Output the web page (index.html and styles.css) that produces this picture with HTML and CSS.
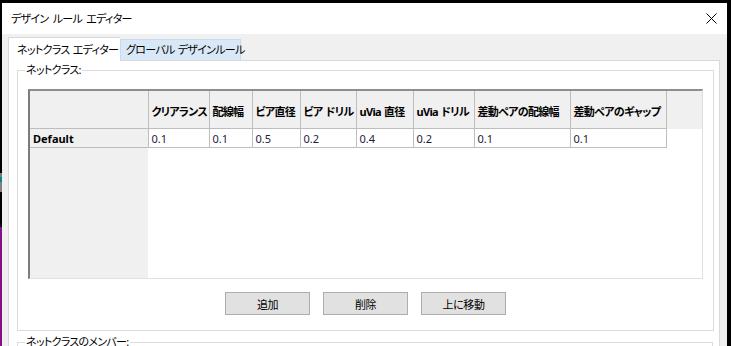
FILE: index.html
```html
<!DOCTYPE html>
<html lang="ja">
<head>
    <meta charset="UTF-8">
    <meta name="viewport" content="width=device-width, initial-scale=1.0">
    <title>デザイン ルール エディター</title>
    <link rel="stylesheet" href="styles.css">
</head>
<body>

    <div class="desktop">
        <div class="backdrop-strip"></div>

        <div class="dialog">
            <div class="titlebar">
                <span class="title">デザイン ルール エディター</span>
                <button class="close-btn" title="閉じる">
                    <svg width="11" height="11" viewBox="0 0 11 11">
                        <path d="M0.5 0.5 L10.5 10.5 M10.5 0.5 L0.5 10.5" stroke="#000" stroke-width="1" fill="none"/>
                    </svg>
                </button>
            </div>

            <div class="dialog-body">
                <div class="tabs">
                    <div class="tab active">ネットクラス エディター</div>
                    <div class="tab">グローバル デザインルール</div>
                </div>

                <div class="tab-panel">
                    <fieldset class="group">
                        <legend>ネットクラス:</legend>

                        <div class="grid-frame">
                            <table class="netclass-grid">
                                <colgroup>
                                    <col style="width:118px">
                                    <col style="width:61px">
                                    <col style="width:43px">
                                    <col style="width:48px">
                                    <col style="width:56px">
                                    <col style="width:57px">
                                    <col style="width:61px">
                                    <col style="width:96px">
                                    <col style="width:96px">
                                    <col style="width:36px">
                                </colgroup>
                                <tr class="head-row">
                                    <th class="corner"></th>
                                    <th>クリアランス</th>
                                    <th>配線幅</th>
                                    <th>ビア直径</th>
                                    <th>ビア ドリル</th>
                                    <th>uVia 直径</th>
                                    <th>uVia ドリル</th>
                                    <th>差動ペアの配線幅</th>
                                    <th>差動ペアのギャップ</th>
                                    <th class="spare"></th>
                                </tr>
                                <tr class="data-row">
                                    <th class="row-label">Default</th>
                                    <td>0.1</td>
                                    <td>0.1</td>
                                    <td>0.5</td>
                                    <td>0.2</td>
                                    <td>0.4</td>
                                    <td>0.2</td>
                                    <td>0.1</td>
                                    <td>0.1</td>
                                    <td class="spare"></td>
                                </tr>
                                <tr class="filler-row">
                                    <th class="row-label"></th>
                                    <td colspan="9"></td>
                                </tr>
                            </table>
                        </div>

                        <div class="button-row">
                            <button class="win-btn">追加</button>
                            <button class="win-btn">削除</button>
                            <button class="win-btn">上に移動</button>
                        </div>
                    </fieldset>

                    <fieldset class="group members">
                        <legend>ネットクラスのメンバー:</legend>
                    </fieldset>
                </div>
            </div>
        </div>
    </div>

</body>
</html>
```

FILE: styles.css
```css
html, body {
    margin: 0;
    padding: 0;
    height: 100%;
}
body {
    background-color: #000;
    font-family: "Noto Sans", "Noto Sans CJK JP", sans-serif;
    font-feature-settings: "palt";
    font-size: 11px;
    letter-spacing: -0.7px;
    word-spacing: 2px;
    color: #000;
    overflow: hidden;
}
.desktop {
    display: flex;
    height: 346px;
}
/* bits of other windows peeking out on the left */
.backdrop-strip {
    width: 2px;
    flex: none;
    background: linear-gradient(to bottom,
        #000 0, #000 173px,
        #7a7a7a 173px, #7a7a7a 177px,
        #008a8a 177px, #008a8a 182px,
        #808080 182px, #808080 192px,
        #000 192px, #000 227px,
        #86108a 227px, #86108a 346px);
}
.dialog {
    width: 725px;
    margin-top: 3px;
    background-color: #f0f0f0;
    display: flex;
    flex-direction: column;
    overflow: hidden;
}
.titlebar {
    height: 31px;
    background-color: #fff;
    display: flex;
    align-items: center;
    justify-content: space-between;
    padding: 0 10px 0 9px;
    flex: none;
}
.title {
    line-height: 16px;
}
.close-btn {
    border: none;
    background: none;
    padding: 0;
    width: 11px;
    height: 11px;
    display: flex;
}
.dialog-body {
    padding: 3px 7px 0 6px;
}
.tabs {
    display: flex;
    align-items: flex-end;
    margin-bottom: -1px;
    position: relative;
    z-index: 1;
}
.tab {
    box-sizing: border-box;
    height: 21px;
    padding: 0 0 0 5px;
    line-height: 19px;
    white-space: nowrap;
    border: 1px solid #c5dcef;
    border-bottom: none;
    background-color: #d8e8f6;
    margin-bottom: 1px;
    width: 121px;
    word-spacing: 1px;
}
.tab.active {
    height: 24px;
    width: 112px;
    padding-left: 8px;
    line-height: 24px;
    background-color: #fff;
    border-color: #d9d9d9;
    border-right: none;
    margin-bottom: 0;
}
.tab-panel {
    background-color: #fff;
    border: 1px solid #d9d9d9;
    padding: 2px 6px 0 8px;
    height: 300px;
}
.group {
    margin: 0;
    border: 1px solid #dcdcdc;
    padding: 0 10px 15px 10px;
}
.group legend {
    margin-left: -3px;
    padding: 0 1px;
    line-height: 14px;
}
.grid-frame {
    margin-top: 12px;
    border-top: 2px solid #8e8e8e;
    border-left: 2px solid #7c7c7c;
    border-right: 1px solid #e0e0e0;
    border-bottom: 1px solid #e0e0e0;
    background-color: #fff;
    height: 187px;
    overflow: hidden;
}
.netclass-grid {
    border-collapse: collapse;
    table-layout: fixed;
    width: 672px;
}
.netclass-grid th,
.netclass-grid td {
    padding: 0 0 0 3px;
    text-align: left;
    white-space: nowrap;
    overflow: hidden;
    font-size: 11px;
}
.head-row th {
    height: 35px;
    background-color: #f0f0f0;
    font-weight: bold;
    border-right: 1px solid #bdbdbd;
    border-bottom: 1px solid #bdbdbd;
    vertical-align: middle;
    padding-top: 2px;
    word-spacing: 1px;
}
.head-row th.spare {
    border: none;
}
.data-row th,
.data-row td {
    height: 17px;
    border-right: 1px solid #bdbdbd;
    border-bottom: 1px solid #bdbdbd;
    color: #1c1c38;
    letter-spacing: 0;
    padding-top: 1px;
}
.data-row td.spare {
    border: none;
}
.row-label {
    background-color: #f0f0f0;
    font-weight: bold;
    color: #000 !important;
}
.filler-row th,
.filler-row td {
    height: 130px;
    border: none;
}
.button-row {
    display: flex;
    justify-content: center;
    gap: 13px;
    margin-top: 13px;
}
.win-btn {
    width: 85px;
    height: 23px;
    background-color: #e1e1e1;
    border: 1px solid #adadad;
    font-family: inherit;
    font-feature-settings: "palt";
    font-size: 11px;
    letter-spacing: -0.4px;
    padding: 0;
    color: #000;
}
.group.members {
    margin-top: 4px;
    height: 40px;
}
```
